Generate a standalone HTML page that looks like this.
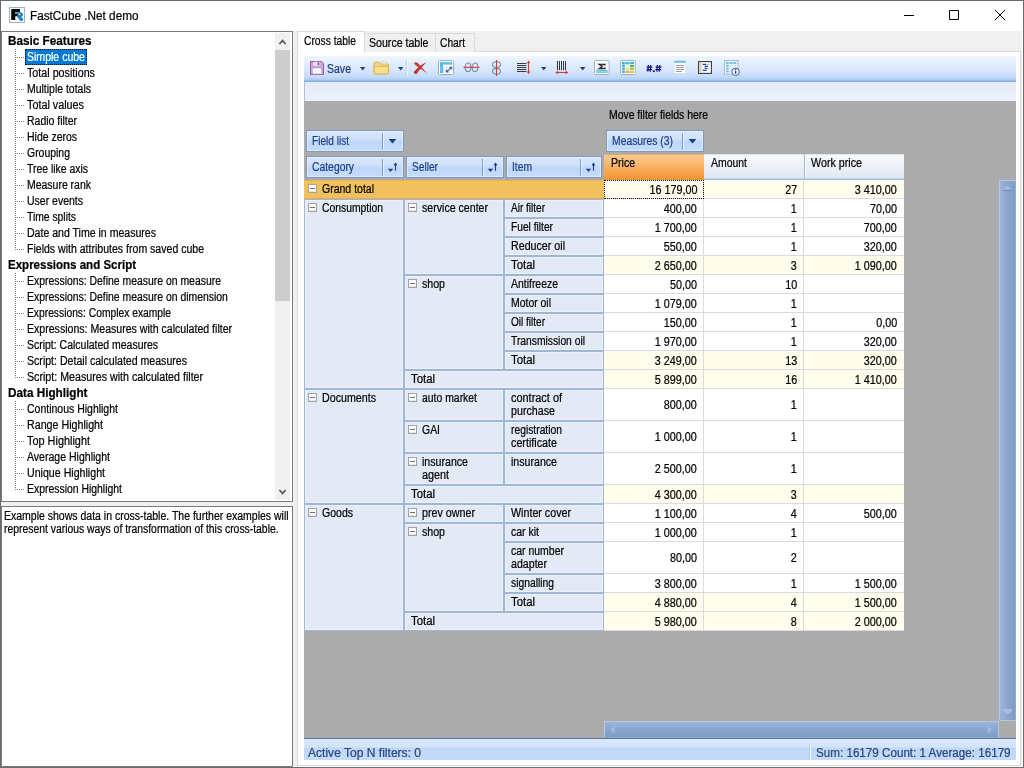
<!DOCTYPE html>
<html><head><meta charset="utf-8"><title>FastCube .Net demo</title>
<style>
html,body{margin:0;padding:0;}
body{width:1024px;height:768px;overflow:hidden;background:#fff;position:relative;font-family:"Liberation Sans",sans-serif;font-size:12px;color:#000;}
div,span,svg{position:absolute;box-sizing:border-box;}
span{white-space:pre;line-height:16px;transform-origin:0 0;-webkit-text-stroke:0.22px;}
#r{left:0;top:0;width:1024px;height:768px;will-change:transform;}
</style></head><body><div id="r">

<div style="left:0px;top:0px;width:1024px;height:768px;border:1px solid #6c6c6c;"></div>
<div style="left:1px;top:31px;width:1021px;height:735px;background:#f0f0f0;"></div>
<svg style="left:9px;top:7px" width="16" height="16" viewBox="0 0 16 16"><rect x="0.5" y="0.5" width="15" height="15" fill="#fff" stroke="#9db3c6"/><path d="M2.2 12.9V3.3c0-.8.5-1.3 1.3-1.3h7.4v3.2H6.3v1.5h3V9.3h-3v3.6z" fill="#0a0a0a"/><path d="M7.2 5.2h3.9c1.8 0 2.9 1 2.9 2.4 0 1.1-.6 1.9-1.7 2.2l2.2 2.9-1.6 1.4H11.6L8.2 9.9V7.9h2.5c.5 0 .8-.2.8-.6s-.3-.6-.8-.6H7.2z" fill="#1583c4"/></svg>
<span style="left:30px;top:8px;transform:scaleX(0.980);">FastCube .Net demo</span>
<svg style="left:896px;top:1px" width="127" height="29" viewBox="0 0 127 29"><path d="M8 14.5h10M53.5 9.5h9v9h-9zM99 9l10 10M109 9l-10 10" stroke="#000" stroke-width="1" fill="none"/></svg>
<div style="left:1px;top:31px;width:292px;height:471px;background:#fff;border:1px solid #7a7a7a;"></div>
<div style="left:275px;top:33px;width:15px;height:467px;background:#f0f0f0;"></div>
<div style="left:275px;top:50px;width:15px;height:251px;background:#cdcdcd;"></div>
<svg style="left:274px;top:33px" width="17" height="467" viewBox="0 0 17 467"><path d="M5.400 11l3.100-3.400 3.100 3.400M5.400 457l3.100 3.400 3.100-3.400" stroke="#5a5a5a" stroke-width="1.800" fill="none"/></svg>
<div style="left:15px;top:49px;width:1px;height:201px;background:repeating-linear-gradient(#808080 0 1px,transparent 1px 2px);"></div>
<div style="left:16px;top:57px;width:9px;height:1px;background:repeating-linear-gradient(90deg,transparent 0 1px,#808080 1px 2px);"></div>
<div style="left:16px;top:73px;width:9px;height:1px;background:repeating-linear-gradient(90deg,transparent 0 1px,#808080 1px 2px);"></div>
<div style="left:16px;top:89px;width:9px;height:1px;background:repeating-linear-gradient(90deg,transparent 0 1px,#808080 1px 2px);"></div>
<div style="left:16px;top:105px;width:9px;height:1px;background:repeating-linear-gradient(90deg,transparent 0 1px,#808080 1px 2px);"></div>
<div style="left:16px;top:121px;width:9px;height:1px;background:repeating-linear-gradient(90deg,transparent 0 1px,#808080 1px 2px);"></div>
<div style="left:16px;top:137px;width:9px;height:1px;background:repeating-linear-gradient(90deg,transparent 0 1px,#808080 1px 2px);"></div>
<div style="left:16px;top:153px;width:9px;height:1px;background:repeating-linear-gradient(90deg,transparent 0 1px,#808080 1px 2px);"></div>
<div style="left:16px;top:169px;width:9px;height:1px;background:repeating-linear-gradient(90deg,transparent 0 1px,#808080 1px 2px);"></div>
<div style="left:16px;top:185px;width:9px;height:1px;background:repeating-linear-gradient(90deg,transparent 0 1px,#808080 1px 2px);"></div>
<div style="left:16px;top:201px;width:9px;height:1px;background:repeating-linear-gradient(90deg,transparent 0 1px,#808080 1px 2px);"></div>
<div style="left:16px;top:217px;width:9px;height:1px;background:repeating-linear-gradient(90deg,transparent 0 1px,#808080 1px 2px);"></div>
<div style="left:16px;top:233px;width:9px;height:1px;background:repeating-linear-gradient(90deg,transparent 0 1px,#808080 1px 2px);"></div>
<div style="left:16px;top:249px;width:9px;height:1px;background:repeating-linear-gradient(90deg,transparent 0 1px,#808080 1px 2px);"></div>
<div style="left:15px;top:273px;width:1px;height:105px;background:repeating-linear-gradient(#808080 0 1px,transparent 1px 2px);"></div>
<div style="left:16px;top:281px;width:9px;height:1px;background:repeating-linear-gradient(90deg,transparent 0 1px,#808080 1px 2px);"></div>
<div style="left:16px;top:297px;width:9px;height:1px;background:repeating-linear-gradient(90deg,transparent 0 1px,#808080 1px 2px);"></div>
<div style="left:16px;top:313px;width:9px;height:1px;background:repeating-linear-gradient(90deg,transparent 0 1px,#808080 1px 2px);"></div>
<div style="left:16px;top:329px;width:9px;height:1px;background:repeating-linear-gradient(90deg,transparent 0 1px,#808080 1px 2px);"></div>
<div style="left:16px;top:345px;width:9px;height:1px;background:repeating-linear-gradient(90deg,transparent 0 1px,#808080 1px 2px);"></div>
<div style="left:16px;top:361px;width:9px;height:1px;background:repeating-linear-gradient(90deg,transparent 0 1px,#808080 1px 2px);"></div>
<div style="left:16px;top:377px;width:9px;height:1px;background:repeating-linear-gradient(90deg,transparent 0 1px,#808080 1px 2px);"></div>
<div style="left:15px;top:401px;width:1px;height:89px;background:repeating-linear-gradient(#808080 0 1px,transparent 1px 2px);"></div>
<div style="left:16px;top:409px;width:9px;height:1px;background:repeating-linear-gradient(90deg,transparent 0 1px,#808080 1px 2px);"></div>
<div style="left:16px;top:425px;width:9px;height:1px;background:repeating-linear-gradient(90deg,transparent 0 1px,#808080 1px 2px);"></div>
<div style="left:16px;top:441px;width:9px;height:1px;background:repeating-linear-gradient(90deg,transparent 0 1px,#808080 1px 2px);"></div>
<div style="left:16px;top:457px;width:9px;height:1px;background:repeating-linear-gradient(90deg,transparent 0 1px,#808080 1px 2px);"></div>
<div style="left:16px;top:473px;width:9px;height:1px;background:repeating-linear-gradient(90deg,transparent 0 1px,#808080 1px 2px);"></div>
<div style="left:16px;top:489px;width:9px;height:1px;background:repeating-linear-gradient(90deg,transparent 0 1px,#808080 1px 2px);"></div>
<span style="left:8.4px;top:33px;font-weight:bold;transform:scaleX(0.978);">Basic Features</span>
<div style="left:25px;top:49px;width:62px;height:16px;background:#0078d7;border:1px dotted #111;"></div>
<span style="left:27px;top:49px;color:#fff;transform:scaleX(0.878);">Simple cube</span>
<span style="left:27px;top:65px;transform:scaleX(0.894);">Total positions</span>
<span style="left:27px;top:81px;transform:scaleX(0.872);">Multiple totals</span>
<span style="left:27px;top:97px;transform:scaleX(0.899);">Total values</span>
<span style="left:27px;top:113px;transform:scaleX(0.872);">Radio filter</span>
<span style="left:27px;top:129px;transform:scaleX(0.872);">Hide zeros</span>
<span style="left:27px;top:145px;transform:scaleX(0.871);">Grouping</span>
<span style="left:27px;top:161px;transform:scaleX(0.868);">Tree like axis</span>
<span style="left:27px;top:177px;transform:scaleX(0.872);">Measure rank</span>
<span style="left:27px;top:193px;transform:scaleX(0.875);">User events</span>
<span style="left:27px;top:209px;transform:scaleX(0.861);">Time splits</span>
<span style="left:27px;top:225px;transform:scaleX(0.879);">Date and Time in measures</span>
<span style="left:27px;top:241px;transform:scaleX(0.879);">Fields with attributes from saved cube</span>
<span style="left:8.4px;top:257px;font-weight:bold;transform:scaleX(0.960);">Expressions and Script</span>
<span style="left:27px;top:273px;transform:scaleX(0.868);">Expressions: Define measure on measure</span>
<span style="left:27px;top:289px;transform:scaleX(0.868);">Expressions: Define measure on dimension</span>
<span style="left:27px;top:305px;transform:scaleX(0.857);">Expressions: Complex example</span>
<span style="left:27px;top:321px;transform:scaleX(0.881);">Expressions: Measures with calculated filter</span>
<span style="left:27px;top:337px;transform:scaleX(0.873);">Script: Calculated measures</span>
<span style="left:27px;top:353px;transform:scaleX(0.882);">Script: Detail calculated measures</span>
<span style="left:27px;top:369px;transform:scaleX(0.889);">Script: Measures with calculated filter</span>
<span style="left:8.4px;top:385px;font-weight:bold;transform:scaleX(0.977);">Data Highlight</span>
<span style="left:27px;top:401px;transform:scaleX(0.874);">Continous Highlight</span>
<span style="left:27px;top:417px;transform:scaleX(0.890);">Range Highlight</span>
<span style="left:27px;top:433px;transform:scaleX(0.908);">Top Highlight</span>
<span style="left:27px;top:449px;transform:scaleX(0.878);">Average Highlight</span>
<span style="left:27px;top:465px;transform:scaleX(0.886);">Unique Highlight</span>
<span style="left:27px;top:481px;transform:scaleX(0.868);">Expression Highlight</span>
<div style="left:1px;top:506px;width:292px;height:261px;background:#fff;border:1px solid #7a7a7a;"></div>
<span style="left:4px;top:508px;transform:scaleX(0.875);">Example shows data in cross-table. The further examples will</span>
<span style="left:3.5px;top:521px;transform:scaleX(0.865);">represent various ways of transformation of this cross-table.</span>
<div style="left:297px;top:51px;width:724px;height:715px;background:#fff;border:1px solid #dadada;"></div>
<div style="left:364px;top:33px;width:72px;height:19px;background:#f0f0f0;border:1px solid #d9d9d9;border-bottom:none;"></div>
<div style="left:435px;top:33px;width:40px;height:19px;background:#f0f0f0;border:1px solid #d9d9d9;border-bottom:none;"></div>
<div style="left:297px;top:31px;width:68px;height:21px;background:#fff;border:1px solid #d9d9d9;border-bottom:none;"></div>
<span style="left:304.3px;top:33px;transform:scaleX(0.857);">Cross table</span>
<span style="left:369px;top:35px;transform:scaleX(0.883);">Source table</span>
<span style="left:440.2px;top:35px;transform:scaleX(0.852);">Chart</span>
<div style="left:304px;top:56px;width:712px;height:26px;background:linear-gradient(#f0f6fe 0,#e3eefd 25%,#d4e5fc 60%,#c1d9f9 82%,#adcbf4 92%,#88acdf 96.500%,#86aade 100%);border-radius:2px 2px 0 0;"></div>
<div style="left:304px;top:82px;width:712px;height:19.5px;background:linear-gradient(#e3ebf8,#edf2fb);border-left:1px solid #b4c2d8;"></div>
<span style="left:327.3px;top:61px;color:#1f3b7d;transform:scaleX(0.877);">Save</span>
<div style="left:304px;top:101px;width:712px;height:638px;background:#ababab;"></div>
<span style="left:609px;top:107px;transform:scaleX(0.868);">Move filter fields here</span>
<div style="left:306px;top:130px;width:98px;height:22px;background:linear-gradient(#d9e8fd 0,#cfe1fb 40%,#bfd7f8 55%,#c6dcfa 100%);border:1px solid #7f99c2;box-shadow:inset 0 0 0 1px rgba(235,244,255,.6);"></div>
<span style="left:312px;top:133px;color:#1c3f8a;transform:scaleX(0.841);">Field list</span>
<div style="left:382px;top:133px;width:1px;height:17px;background:#7d9dce;"></div>
<div style="left:383px;top:133px;width:1px;height:17px;background:rgba(255,255,255,.55);"></div>
<svg style="left:388px;top:139px" width="9" height="5" viewBox="0 0 9 5"><path d="M0.6 0h7.8L4.5 4.6z" fill="#1c3f8c"/></svg>
<div style="left:606px;top:130px;width:98px;height:22px;background:linear-gradient(#d9e8fd 0,#cfe1fb 40%,#bfd7f8 55%,#c6dcfa 100%);border:1px solid #7f99c2;box-shadow:inset 0 0 0 1px rgba(235,244,255,.6);"></div>
<span style="left:612px;top:133px;color:#1c3f8a;transform:scaleX(0.863);">Measures (3)</span>
<div style="left:682px;top:133px;width:1px;height:17px;background:#7d9dce;"></div>
<div style="left:683px;top:133px;width:1px;height:17px;background:rgba(255,255,255,.55);"></div>
<svg style="left:688px;top:139px" width="9" height="5" viewBox="0 0 9 5"><path d="M0.6 0h7.8L4.5 4.6z" fill="#1c3f8c"/></svg>
<div style="left:306px;top:156px;width:98px;height:22px;background:linear-gradient(#d9e8fd 0,#cfe1fb 40%,#bfd7f8 55%,#c6dcfa 100%);border:1px solid #7f99c2;box-shadow:inset 0 0 0 1px rgba(235,244,255,.6);"></div>
<span style="left:312px;top:159px;color:#1c3f8a;transform:scaleX(0.863);">Category</span>
<div style="left:382px;top:159px;width:1px;height:17px;background:#7d9dce;"></div>
<div style="left:383px;top:159px;width:1px;height:17px;background:rgba(255,255,255,.55);"></div>
<svg style="left:387px;top:162px" width="12" height="12" viewBox="0 0 12 12"><path d="M0.8 6.8h5.4L3.5 10z" fill="#1c3f8c"/><path d="M8.5 8.8V1.6M7.1 3.3l1.4-1.8 1.4 1.8" stroke="#1c3f8c" stroke-width="1.1" fill="none"/></svg>
<div style="left:406px;top:156px;width:98px;height:22px;background:linear-gradient(#d9e8fd 0,#cfe1fb 40%,#bfd7f8 55%,#c6dcfa 100%);border:1px solid #7f99c2;box-shadow:inset 0 0 0 1px rgba(235,244,255,.6);"></div>
<span style="left:412px;top:159px;color:#1c3f8a;transform:scaleX(0.847);">Seller</span>
<div style="left:482px;top:159px;width:1px;height:17px;background:#7d9dce;"></div>
<div style="left:483px;top:159px;width:1px;height:17px;background:rgba(255,255,255,.55);"></div>
<svg style="left:487px;top:162px" width="12" height="12" viewBox="0 0 12 12"><path d="M0.8 6.8h5.4L3.5 10z" fill="#1c3f8c"/><path d="M8.5 8.8V1.6M7.1 3.3l1.4-1.8 1.4 1.8" stroke="#1c3f8c" stroke-width="1.1" fill="none"/></svg>
<div style="left:506px;top:156px;width:96px;height:22px;background:linear-gradient(#d9e8fd 0,#cfe1fb 40%,#bfd7f8 55%,#c6dcfa 100%);border:1px solid #7f99c2;box-shadow:inset 0 0 0 1px rgba(235,244,255,.6);"></div>
<span style="left:512px;top:159px;color:#1c3f8a;transform:scaleX(0.857);">Item</span>
<div style="left:580px;top:159px;width:1px;height:17px;background:#7d9dce;"></div>
<div style="left:581px;top:159px;width:1px;height:17px;background:rgba(255,255,255,.55);"></div>
<svg style="left:585px;top:162px" width="12" height="12" viewBox="0 0 12 12"><path d="M0.8 6.8h5.4L3.5 10z" fill="#1c3f8c"/><path d="M8.5 8.8V1.6M7.1 3.3l1.4-1.8 1.4 1.8" stroke="#1c3f8c" stroke-width="1.1" fill="none"/></svg>
<div style="left:604px;top:154px;width:100px;height:26px;background:linear-gradient(#d9a766 0,#e4b071 1px,#fbc88f 1.5px,#f9ba74 35%,#f6a650 65%,#f4983a 92%,#e58f3a 100%);"></div>
<div style="left:704px;top:154px;width:100px;height:26px;background:linear-gradient(#d3d7de 0,#f3f6fb 1px,#f7f9fd 2px,#eef2f9 40%,#dfe7f3 92%,#a3bbda 97%);"></div>
<div style="left:804px;top:154px;width:99.5px;height:26px;background:linear-gradient(#d3d7de 0,#f3f6fb 1px,#f7f9fd 2px,#eef2f9 40%,#dfe7f3 92%,#a3bbda 97%);border-left:1px solid #a3bbda;"></div>
<div style="left:805px;top:155px;width:1px;height:23px;background:rgba(255,255,255,.7);"></div>
<span style="left:611px;top:155px;transform:scaleX(0.878);">Price</span>
<span style="left:711px;top:155px;transform:scaleX(0.870);">Amount</span>
<span style="left:811px;top:155px;transform:scaleX(0.893);">Work price</span>
<div style="left:604px;top:180px;width:299.5px;height:451px;background:#fff;"></div>
<div style="left:604px;top:180px;width:299.5px;height:19px;background:#fffdec;"></div>
<div style="left:604px;top:198px;width:299.5px;height:1px;background:#d9dbe0;"></div>
<div style="left:604px;top:217px;width:299.5px;height:1px;background:#d9dbe0;"></div>
<div style="left:604px;top:236px;width:299.5px;height:1px;background:#d9dbe0;"></div>
<div style="left:604px;top:255px;width:299.5px;height:1px;background:#d9dbe0;"></div>
<div style="left:604px;top:256px;width:299.5px;height:19px;background:#fffdec;"></div>
<div style="left:604px;top:274px;width:299.5px;height:1px;background:#d9dbe0;"></div>
<div style="left:604px;top:293px;width:299.5px;height:1px;background:#d9dbe0;"></div>
<div style="left:604px;top:312px;width:299.5px;height:1px;background:#d9dbe0;"></div>
<div style="left:604px;top:331px;width:299.5px;height:1px;background:#d9dbe0;"></div>
<div style="left:604px;top:350px;width:299.5px;height:1px;background:#d9dbe0;"></div>
<div style="left:604px;top:351px;width:299.5px;height:19px;background:#fffdec;"></div>
<div style="left:604px;top:369px;width:299.5px;height:1px;background:#d9dbe0;"></div>
<div style="left:604px;top:370px;width:299.5px;height:19px;background:#fffdec;"></div>
<div style="left:604px;top:388px;width:299.5px;height:1px;background:#d9dbe0;"></div>
<div style="left:604px;top:420px;width:299.5px;height:1px;background:#d9dbe0;"></div>
<div style="left:604px;top:452px;width:299.5px;height:1px;background:#d9dbe0;"></div>
<div style="left:604px;top:484px;width:299.5px;height:1px;background:#d9dbe0;"></div>
<div style="left:604px;top:485px;width:299.5px;height:19px;background:#fffdec;"></div>
<div style="left:604px;top:503px;width:299.5px;height:1px;background:#d9dbe0;"></div>
<div style="left:604px;top:522px;width:299.5px;height:1px;background:#d9dbe0;"></div>
<div style="left:604px;top:541px;width:299.5px;height:1px;background:#d9dbe0;"></div>
<div style="left:604px;top:573px;width:299.5px;height:1px;background:#d9dbe0;"></div>
<div style="left:604px;top:592px;width:299.5px;height:1px;background:#d9dbe0;"></div>
<div style="left:604px;top:593px;width:299.5px;height:19px;background:#fffdec;"></div>
<div style="left:604px;top:611px;width:299.5px;height:1px;background:#d9dbe0;"></div>
<div style="left:604px;top:612px;width:299.5px;height:19px;background:#fffdec;"></div>
<div style="left:604px;top:630px;width:299.5px;height:1px;background:#d9dbe0;"></div>
<div style="left:703px;top:180px;width:1px;height:451px;background:#d9dbe0;"></div>
<div style="left:803px;top:180px;width:1px;height:451px;background:#d9dbe0;"></div>
<span style="right:327px;top:182px;transform:scaleX(0.899);transform-origin:100% 0;">16 179,00</span>
<span style="right:227px;top:182px;transform:scaleX(0.899);transform-origin:100% 0;">27</span>
<span style="right:127px;top:182px;transform:scaleX(0.899);transform-origin:100% 0;">3 410,00</span>
<span style="right:327px;top:201px;transform:scaleX(0.899);transform-origin:100% 0;">400,00</span>
<span style="right:227px;top:201px;transform:scaleX(0.899);transform-origin:100% 0;">1</span>
<span style="right:127px;top:201px;transform:scaleX(0.899);transform-origin:100% 0;">70,00</span>
<span style="right:327px;top:220px;transform:scaleX(0.899);transform-origin:100% 0;">1 700,00</span>
<span style="right:227px;top:220px;transform:scaleX(0.899);transform-origin:100% 0;">1</span>
<span style="right:127px;top:220px;transform:scaleX(0.899);transform-origin:100% 0;">700,00</span>
<span style="right:327px;top:239px;transform:scaleX(0.899);transform-origin:100% 0;">550,00</span>
<span style="right:227px;top:239px;transform:scaleX(0.899);transform-origin:100% 0;">1</span>
<span style="right:127px;top:239px;transform:scaleX(0.899);transform-origin:100% 0;">320,00</span>
<span style="right:327px;top:258px;transform:scaleX(0.899);transform-origin:100% 0;">2 650,00</span>
<span style="right:227px;top:258px;transform:scaleX(0.899);transform-origin:100% 0;">3</span>
<span style="right:127px;top:258px;transform:scaleX(0.899);transform-origin:100% 0;">1 090,00</span>
<span style="right:327px;top:277px;transform:scaleX(0.899);transform-origin:100% 0;">50,00</span>
<span style="right:227px;top:277px;transform:scaleX(0.899);transform-origin:100% 0;">10</span>
<span style="right:327px;top:296px;transform:scaleX(0.899);transform-origin:100% 0;">1 079,00</span>
<span style="right:227px;top:296px;transform:scaleX(0.899);transform-origin:100% 0;">1</span>
<span style="right:327px;top:315px;transform:scaleX(0.899);transform-origin:100% 0;">150,00</span>
<span style="right:227px;top:315px;transform:scaleX(0.899);transform-origin:100% 0;">1</span>
<span style="right:127px;top:315px;transform:scaleX(0.899);transform-origin:100% 0;">0,00</span>
<span style="right:327px;top:334px;transform:scaleX(0.899);transform-origin:100% 0;">1 970,00</span>
<span style="right:227px;top:334px;transform:scaleX(0.899);transform-origin:100% 0;">1</span>
<span style="right:127px;top:334px;transform:scaleX(0.899);transform-origin:100% 0;">320,00</span>
<span style="right:327px;top:353px;transform:scaleX(0.899);transform-origin:100% 0;">3 249,00</span>
<span style="right:227px;top:353px;transform:scaleX(0.899);transform-origin:100% 0;">13</span>
<span style="right:127px;top:353px;transform:scaleX(0.899);transform-origin:100% 0;">320,00</span>
<span style="right:327px;top:372px;transform:scaleX(0.899);transform-origin:100% 0;">5 899,00</span>
<span style="right:227px;top:372px;transform:scaleX(0.899);transform-origin:100% 0;">16</span>
<span style="right:127px;top:372px;transform:scaleX(0.899);transform-origin:100% 0;">1 410,00</span>
<span style="right:327px;top:397px;transform:scaleX(0.899);transform-origin:100% 0;">800,00</span>
<span style="right:227px;top:397px;transform:scaleX(0.899);transform-origin:100% 0;">1</span>
<span style="right:327px;top:429px;transform:scaleX(0.899);transform-origin:100% 0;">1 000,00</span>
<span style="right:227px;top:429px;transform:scaleX(0.899);transform-origin:100% 0;">1</span>
<span style="right:327px;top:461px;transform:scaleX(0.899);transform-origin:100% 0;">2 500,00</span>
<span style="right:227px;top:461px;transform:scaleX(0.899);transform-origin:100% 0;">1</span>
<span style="right:327px;top:487px;transform:scaleX(0.899);transform-origin:100% 0;">4 300,00</span>
<span style="right:227px;top:487px;transform:scaleX(0.899);transform-origin:100% 0;">3</span>
<span style="right:327px;top:506px;transform:scaleX(0.899);transform-origin:100% 0;">1 100,00</span>
<span style="right:227px;top:506px;transform:scaleX(0.899);transform-origin:100% 0;">4</span>
<span style="right:127px;top:506px;transform:scaleX(0.899);transform-origin:100% 0;">500,00</span>
<span style="right:327px;top:525px;transform:scaleX(0.899);transform-origin:100% 0;">1 000,00</span>
<span style="right:227px;top:525px;transform:scaleX(0.899);transform-origin:100% 0;">1</span>
<span style="right:327px;top:550px;transform:scaleX(0.899);transform-origin:100% 0;">80,00</span>
<span style="right:227px;top:550px;transform:scaleX(0.899);transform-origin:100% 0;">2</span>
<span style="right:327px;top:576px;transform:scaleX(0.899);transform-origin:100% 0;">3 800,00</span>
<span style="right:227px;top:576px;transform:scaleX(0.899);transform-origin:100% 0;">1</span>
<span style="right:127px;top:576px;transform:scaleX(0.899);transform-origin:100% 0;">1 500,00</span>
<span style="right:327px;top:595px;transform:scaleX(0.899);transform-origin:100% 0;">4 880,00</span>
<span style="right:227px;top:595px;transform:scaleX(0.899);transform-origin:100% 0;">4</span>
<span style="right:127px;top:595px;transform:scaleX(0.899);transform-origin:100% 0;">1 500,00</span>
<span style="right:327px;top:614px;transform:scaleX(0.899);transform-origin:100% 0;">5 980,00</span>
<span style="right:227px;top:614px;transform:scaleX(0.899);transform-origin:100% 0;">8</span>
<span style="right:127px;top:614px;transform:scaleX(0.899);transform-origin:100% 0;">2 000,00</span>
<div style="left:604px;top:180px;width:100px;height:19px;border:1px dotted #111;"></div>
<div style="left:304px;top:180px;width:300px;height:19px;background:#f3c05e;border-top:1px solid #efb24e;border-bottom:1px solid #e7a84a;"></div>
<svg style="left:308px;top:184px" width="9" height="9" viewBox="0 0 9 9"><rect x="0.5" y="0.5" width="8" height="8" fill="#fcfcfc" stroke="#a2a2a2"/><path d="M1 7.500h7" stroke="#e6e6e6"/><path d="M2 4.500h5" stroke="#707070"/></svg>
<span style="left:321.5px;top:181px;transform:scaleX(0.876);">Grand total</span>
<div style="left:304px;top:199px;width:100px;height:190px;background:#e3eaf6;border:1px solid #a1b6d3;box-shadow:inset 0 0 0 1px #e8f1fd;"></div>
<svg style="left:308px;top:203px" width="9" height="9" viewBox="0 0 9 9"><rect x="0.5" y="0.5" width="8" height="8" fill="#fcfcfc" stroke="#a2a2a2"/><path d="M1 7.500h7" stroke="#e6e6e6"/><path d="M2 4.500h5" stroke="#707070"/></svg>
<span style="left:321.5px;top:200px;transform:scaleX(0.863);">Consumption</span>
<div style="left:304px;top:389px;width:100px;height:115px;background:#e3eaf6;border:1px solid #a1b6d3;box-shadow:inset 0 0 0 1px #e8f1fd;"></div>
<svg style="left:308px;top:393px" width="9" height="9" viewBox="0 0 9 9"><rect x="0.5" y="0.5" width="8" height="8" fill="#fcfcfc" stroke="#a2a2a2"/><path d="M1 7.500h7" stroke="#e6e6e6"/><path d="M2 4.500h5" stroke="#707070"/></svg>
<span style="left:321.5px;top:390px;transform:scaleX(0.890);">Documents</span>
<div style="left:304px;top:504px;width:100px;height:127px;background:#e3eaf6;border:1px solid #a1b6d3;box-shadow:inset 0 0 0 1px #e8f1fd;"></div>
<svg style="left:308px;top:508px" width="9" height="9" viewBox="0 0 9 9"><rect x="0.5" y="0.5" width="8" height="8" fill="#fcfcfc" stroke="#a2a2a2"/><path d="M1 7.500h7" stroke="#e6e6e6"/><path d="M2 4.500h5" stroke="#707070"/></svg>
<span style="left:321.5px;top:505px;transform:scaleX(0.877);">Goods</span>
<div style="left:404px;top:199px;width:100px;height:76px;background:#e3eaf6;border:1px solid #a1b6d3;box-shadow:inset 0 0 0 1px #e8f1fd;"></div>
<svg style="left:408px;top:203px" width="9" height="9" viewBox="0 0 9 9"><rect x="0.5" y="0.5" width="8" height="8" fill="#fcfcfc" stroke="#a2a2a2"/><path d="M1 7.500h7" stroke="#e6e6e6"/><path d="M2 4.500h5" stroke="#707070"/></svg>
<span style="left:421.5px;top:200px;transform:scaleX(0.884);">service center</span>
<div style="left:404px;top:275px;width:100px;height:95px;background:#e3eaf6;border:1px solid #a1b6d3;box-shadow:inset 0 0 0 1px #e8f1fd;"></div>
<svg style="left:408px;top:279px" width="9" height="9" viewBox="0 0 9 9"><rect x="0.5" y="0.5" width="8" height="8" fill="#fcfcfc" stroke="#a2a2a2"/><path d="M1 7.500h7" stroke="#e6e6e6"/><path d="M2 4.500h5" stroke="#707070"/></svg>
<span style="left:421.5px;top:276px;transform:scaleX(0.884);">shop</span>
<div style="left:404px;top:370px;width:200px;height:19px;background:#e3eaf6;border:1px solid #a1b6d3;box-shadow:inset 0 0 0 1px #e8f1fd;"></div>
<span style="left:411px;top:371px;transform:scaleX(0.947);">Total</span>
<div style="left:404px;top:389px;width:100px;height:32px;background:#e3eaf6;border:1px solid #a1b6d3;box-shadow:inset 0 0 0 1px #e8f1fd;"></div>
<svg style="left:408px;top:393px" width="9" height="9" viewBox="0 0 9 9"><rect x="0.5" y="0.5" width="8" height="8" fill="#fcfcfc" stroke="#a2a2a2"/><path d="M1 7.500h7" stroke="#e6e6e6"/><path d="M2 4.500h5" stroke="#707070"/></svg>
<span style="left:421.5px;top:390px;transform:scaleX(0.868);">auto market</span>
<div style="left:404px;top:421px;width:100px;height:32px;background:#e3eaf6;border:1px solid #a1b6d3;box-shadow:inset 0 0 0 1px #e8f1fd;"></div>
<svg style="left:408px;top:425px" width="9" height="9" viewBox="0 0 9 9"><rect x="0.5" y="0.5" width="8" height="8" fill="#fcfcfc" stroke="#a2a2a2"/><path d="M1 7.500h7" stroke="#e6e6e6"/><path d="M2 4.500h5" stroke="#707070"/></svg>
<span style="left:421.5px;top:422px;transform:scaleX(0.871);">GAI</span>
<div style="left:404px;top:453px;width:100px;height:32px;background:#e3eaf6;border:1px solid #a1b6d3;box-shadow:inset 0 0 0 1px #e8f1fd;"></div>
<svg style="left:408px;top:457px" width="9" height="9" viewBox="0 0 9 9"><rect x="0.5" y="0.5" width="8" height="8" fill="#fcfcfc" stroke="#a2a2a2"/><path d="M1 7.500h7" stroke="#e6e6e6"/><path d="M2 4.500h5" stroke="#707070"/></svg>
<span style="left:421.5px;top:454px;transform:scaleX(0.884);">insurance</span>
<span style="left:421.5px;top:467px;transform:scaleX(0.899);">agent</span>
<div style="left:404px;top:485px;width:200px;height:19px;background:#e3eaf6;border:1px solid #a1b6d3;box-shadow:inset 0 0 0 1px #e8f1fd;"></div>
<span style="left:411px;top:486px;transform:scaleX(0.947);">Total</span>
<div style="left:404px;top:504px;width:100px;height:19px;background:#e3eaf6;border:1px solid #a1b6d3;box-shadow:inset 0 0 0 1px #e8f1fd;"></div>
<svg style="left:408px;top:508px" width="9" height="9" viewBox="0 0 9 9"><rect x="0.5" y="0.5" width="8" height="8" fill="#fcfcfc" stroke="#a2a2a2"/><path d="M1 7.500h7" stroke="#e6e6e6"/><path d="M2 4.500h5" stroke="#707070"/></svg>
<span style="left:421.5px;top:505px;transform:scaleX(0.893);">prev owner</span>
<div style="left:404px;top:523px;width:100px;height:89px;background:#e3eaf6;border:1px solid #a1b6d3;box-shadow:inset 0 0 0 1px #e8f1fd;"></div>
<svg style="left:408px;top:527px" width="9" height="9" viewBox="0 0 9 9"><rect x="0.5" y="0.5" width="8" height="8" fill="#fcfcfc" stroke="#a2a2a2"/><path d="M1 7.500h7" stroke="#e6e6e6"/><path d="M2 4.500h5" stroke="#707070"/></svg>
<span style="left:421.5px;top:524px;transform:scaleX(0.884);">shop</span>
<div style="left:404px;top:612px;width:200px;height:19px;background:#e3eaf6;border:1px solid #a1b6d3;box-shadow:inset 0 0 0 1px #e8f1fd;"></div>
<span style="left:411px;top:613px;transform:scaleX(0.947);">Total</span>
<div style="left:504px;top:199px;width:100px;height:19px;background:#e3eaf6;border:1px solid #a1b6d3;box-shadow:inset 0 0 0 1px #e8f1fd;"></div>
<span style="left:510.5px;top:200px;transform:scaleX(0.836);">Air filter</span>
<div style="left:504px;top:218px;width:100px;height:19px;background:#e3eaf6;border:1px solid #a1b6d3;box-shadow:inset 0 0 0 1px #e8f1fd;"></div>
<span style="left:510.5px;top:219px;transform:scaleX(0.851);">Fuel filter</span>
<div style="left:504px;top:237px;width:100px;height:19px;background:#e3eaf6;border:1px solid #a1b6d3;box-shadow:inset 0 0 0 1px #e8f1fd;"></div>
<span style="left:510.5px;top:238px;transform:scaleX(0.890);">Reducer oil</span>
<div style="left:504px;top:256px;width:100px;height:19px;background:#e3eaf6;border:1px solid #a1b6d3;box-shadow:inset 0 0 0 1px #e8f1fd;"></div>
<span style="left:510.5px;top:257px;transform:scaleX(0.947);">Total</span>
<div style="left:504px;top:275px;width:100px;height:19px;background:#e3eaf6;border:1px solid #a1b6d3;box-shadow:inset 0 0 0 1px #e8f1fd;"></div>
<span style="left:510.5px;top:276px;transform:scaleX(0.870);">Antifreeze</span>
<div style="left:504px;top:294px;width:100px;height:19px;background:#e3eaf6;border:1px solid #a1b6d3;box-shadow:inset 0 0 0 1px #e8f1fd;"></div>
<span style="left:510.5px;top:295px;transform:scaleX(0.869);">Motor oil</span>
<div style="left:504px;top:313px;width:100px;height:19px;background:#e3eaf6;border:1px solid #a1b6d3;box-shadow:inset 0 0 0 1px #e8f1fd;"></div>
<span style="left:510.5px;top:314px;transform:scaleX(0.836);">Oil filter</span>
<div style="left:504px;top:332px;width:100px;height:19px;background:#e3eaf6;border:1px solid #a1b6d3;box-shadow:inset 0 0 0 1px #e8f1fd;"></div>
<span style="left:510.5px;top:333px;transform:scaleX(0.858);">Transmission oil</span>
<div style="left:504px;top:351px;width:100px;height:19px;background:#e3eaf6;border:1px solid #a1b6d3;box-shadow:inset 0 0 0 1px #e8f1fd;"></div>
<span style="left:510.5px;top:352px;transform:scaleX(0.947);">Total</span>
<div style="left:504px;top:389px;width:100px;height:32px;background:#e3eaf6;border:1px solid #a1b6d3;box-shadow:inset 0 0 0 1px #e8f1fd;"></div>
<span style="left:510.5px;top:390px;transform:scaleX(0.910);">contract of</span>
<span style="left:510.5px;top:403px;transform:scaleX(0.891);">purchase</span>
<div style="left:504px;top:421px;width:100px;height:32px;background:#e3eaf6;border:1px solid #a1b6d3;box-shadow:inset 0 0 0 1px #e8f1fd;"></div>
<span style="left:510.5px;top:422px;transform:scaleX(0.859);">registration</span>
<span style="left:510.5px;top:435px;transform:scaleX(0.896);">certificate</span>
<div style="left:504px;top:453px;width:100px;height:32px;background:#e3eaf6;border:1px solid #a1b6d3;box-shadow:inset 0 0 0 1px #e8f1fd;"></div>
<span style="left:510.5px;top:454px;transform:scaleX(0.884);">insurance</span>
<div style="left:504px;top:504px;width:100px;height:19px;background:#e3eaf6;border:1px solid #a1b6d3;box-shadow:inset 0 0 0 1px #e8f1fd;"></div>
<span style="left:510.5px;top:505px;transform:scaleX(0.891);">Winter cover</span>
<div style="left:504px;top:523px;width:100px;height:19px;background:#e3eaf6;border:1px solid #a1b6d3;box-shadow:inset 0 0 0 1px #e8f1fd;"></div>
<span style="left:510.5px;top:524px;transform:scaleX(0.875);">car kit</span>
<div style="left:504px;top:542px;width:100px;height:32px;background:#e3eaf6;border:1px solid #a1b6d3;box-shadow:inset 0 0 0 1px #e8f1fd;"></div>
<span style="left:510.5px;top:543px;transform:scaleX(0.873);">car number</span>
<span style="left:510.5px;top:556px;transform:scaleX(0.885);">adapter</span>
<div style="left:504px;top:574px;width:100px;height:19px;background:#e3eaf6;border:1px solid #a1b6d3;box-shadow:inset 0 0 0 1px #e8f1fd;"></div>
<span style="left:510.5px;top:575px;transform:scaleX(0.859);">signalling</span>
<div style="left:504px;top:593px;width:100px;height:19px;background:#e3eaf6;border:1px solid #a1b6d3;box-shadow:inset 0 0 0 1px #e8f1fd;"></div>
<span style="left:510.5px;top:594px;transform:scaleX(0.947);">Total</span>
<div style="left:999px;top:180px;width:17px;height:541px;background:linear-gradient(90deg,#9cb5da,#8aa6cf 50%,#7f9cc7);border:1px solid #b4c8e4;border-right-color:#8eaad2;"></div>
<div style="left:604px;top:721px;width:395px;height:17px;background:linear-gradient(#9cb5da,#8aa6cf 50%,#7f9cc7);border:1px solid #b4c8e4;border-bottom-color:#8eaad2;"></div>
<svg style="left:999px;top:180px" width="17" height="541" viewBox="0 0 17 541"><path d="M4 9.600l4.500-4 4.500 4z" fill="#a5bde0"/><path d="M4 10.5h9" stroke="#7391bf"/><path d="M4 530.4l4.5 4 4.5-4z" fill="#a9c0e2"/><path d="M4 529.9h9" stroke="#b9cce8"/></svg>
<svg style="left:604px;top:721px" width="395" height="17" viewBox="0 0 395 17"><path d="M10.5 4.5l-4 4 4 4zM384 4.5l4 4-4 4z" fill="#a3bbdf"/></svg>
<svg style="left:310px;top:61px" width="14" height="14" viewBox="0 0 14 14"><path d="M0.5 0.5h11.2l1.8 1.8v11.2h-13z" fill="#c9a3dc" stroke="#9a56b4"/><rect x="2.5" y="7" width="9" height="6" fill="#fafafa" stroke="#b9a7c4" stroke-width=".6"/><rect x="3.2" y="0.8" width="7" height="4.2" fill="#e9dff0"/><rect x="7.6" y="1.3" width="1.8" height="3" fill="#9a56b4"/></svg>
<svg style="left:359.5px;top:67px" width="6" height="4" viewBox="0 0 6 4"><path d="M0 0h5.4L2.7 3.5z" fill="#1f3f8f"/></svg>
<svg style="left:373px;top:60px" width="17" height="15" viewBox="0 0 17 15"><path d="M1 3.2c0-.6.4-1 1-1h4l1.4 1.6h7c.6 0 1 .4 1 1V13c0 .5-.4.9-1 .9H2c-.6 0-1-.4-1-.9z" fill="#f3d77a" stroke="#d4b04a" stroke-width=".9"/><path d="M8.5 2.4l2.6-1.2 3.4 1.4v1.2h-6z" fill="#f8f4e4" stroke="#b9c79a" stroke-width=".5"/><path d="M1 6.3h14.4V13c0 .5-.4.9-1 .9H2c-.6 0-1-.4-1-.9z" fill="#f7e08e" stroke="#d4b04a" stroke-width=".9"/></svg>
<svg style="left:398.3px;top:67px" width="6" height="4" viewBox="0 0 6 4"><path d="M0 0h5.4L2.7 3.5z" fill="#1f3f8f"/></svg>
<div style="left:406px;top:60px;width:1px;height:16px;background:#c3d6f0;"></div>
<div style="left:407px;top:60px;width:1px;height:16px;background:#f4f8ff;"></div>
<svg style="left:413px;top:61px" width="16" height="14" viewBox="0 0 16 14"><path d="M0.900 10.800C3.200 8.200 7.200 3.800 13.700 0.900 9.800 4.600 6 9 3.600 12.900 2.600 13.600 0.600 12.600 0.900 10.800z" fill="#c5302a"/><path d="M1.300 2.100C1.900 0.900 3.500 0.900 4.400 1.700 7.200 4.600 10.600 8.400 14.500 12.300 10.400 10.100 6 6.700 1.700 3.600 1.200 3.200 1.100 2.600 1.300 2.100z" fill="#cc372d"/></svg>
<svg style="left:438px;top:60px" width="16" height="15" viewBox="0 0 16 15"><rect x="0.5" y="0.5" width="15" height="14" rx="1" fill="#fff" stroke="#a0abbb"/><rect x="2" y="2" width="12" height="2.600" fill="#4cbdea"/><rect x="2" y="2" width="3.200" height="11" fill="#4cbdea"/><path d="M5.500 4.600v8.400M8.500 4.600v8.400M11.500 4.600v8.400M5.200 7.400h8.800M5.200 10.200h8.800" stroke="#d9dde3" stroke-width=".6"/><path d="M2 7.400h3.200M2 10.200h3.200M8.500 2v2.600M11.500 2v2.600M5.400 2v2.600" stroke="#a5def5" stroke-width=".6"/><path d="M8.600 11.600L13.400 7.600M8.400 9.700v2.100h2.100M11.500 7.400h2.100v2.100" stroke="#3566c8" stroke-width="1.200" fill="none"/></svg>
<svg style="left:463px;top:61px" width="17" height="13" viewBox="0 0 17 13"><ellipse cx="5" cy="6.300" rx="2.900" ry="4.300" fill="none" stroke="#7f8c9c" stroke-width="1.100"/><ellipse cx="12" cy="6.300" rx="2.900" ry="4.300" fill="none" stroke="#7f8c9c" stroke-width="1.100"/><path d="M0.500 6.300h16" stroke="#d8382c" stroke-width="1.100"/></svg>
<svg style="left:491px;top:60px" width="11" height="16" viewBox="0 0 11 16"><ellipse cx="5.500" cy="4.600" rx="4" ry="2.900" fill="none" stroke="#7f8c9c" stroke-width="1.100"/><ellipse cx="5.500" cy="11.300" rx="4" ry="2.900" fill="none" stroke="#7f8c9c" stroke-width="1.100"/><path d="M5.500 0v16" stroke="#d8382c" stroke-width="1.100"/></svg>
<svg style="left:516px;top:60px" width="15" height="15" viewBox="0 0 15 15"><path d="M1 3.500h9.400M1 5.500h9.400M1 7.500h9.400M1 9.500h9.400M1 11.500h9.400" stroke="#3a3a3a" stroke-width="1"/><path d="M12.500 1.500v12" stroke="#d8382c" stroke-width="1.100"/><path d="M12.500 0.600l1.700 2.600h-3.400zM12.500 14.200l1.700-2.600h-3.400z" fill="#d8382c"/></svg>
<svg style="left:541.2px;top:67px" width="6" height="4" viewBox="0 0 6 4"><path d="M0 0h5.4L2.7 3.5z" fill="#1f3f8f"/></svg>
<svg style="left:555px;top:60px" width="14" height="15" viewBox="0 0 14 15"><path d="M2.500 1v9.200M4.500 1v9.200M6.500 1v9.200M8.500 1v9.200M10.500 1v9.200" stroke="#3a3a3a" stroke-width="1"/><path d="M1.500 12.500h11" stroke="#d8382c" stroke-width="1.100"/><path d="M0.300 12.500l2.600-1.700v3.400zM13.300 12.500l-2.600-1.700v3.400z" fill="#d8382c"/></svg>
<svg style="left:580px;top:67px" width="6" height="4" viewBox="0 0 6 4"><path d="M0 0h5.4L2.7 3.5z" fill="#1f3f8f"/></svg>
<svg style="left:594px;top:60px" width="16" height="15" viewBox="0 0 16 15"><rect x="0.5" y="0.5" width="14.6" height="14" rx="1" fill="#fff" stroke="#a5afbe"/><path d="M2.300 3.800h11M2.300 6.500h11M2.300 9h11" stroke="#e3e6ea" stroke-width=".7"/><rect x="2.200" y="9.900" width="11.300" height="2.900" fill="#58c2e5"/><path d="M3.600 11.400h2.200M6.800 11.400h2.200M10 11.400h2.200" stroke="#b5e6f5" stroke-width=".9"/><path d="M10.900 5.400V4.500H5.400L8 6.500 5.400 8.500h5.500V7.600" fill="none" stroke="#2e2e2e" stroke-width="1.500"/></svg>
<svg style="left:620px;top:60px" width="16" height="15" viewBox="0 0 16 15"><rect x="0.5" y="0.5" width="14.800" height="14" rx="1" fill="#fff" stroke="#a5afbe"/><rect x="2" y="2" width="12" height="2.400" fill="#41b4e6"/><rect x="2" y="2" width="3" height="11" fill="#41b4e6"/><rect x="5.500" y="5" width="4" height="2.400" fill="#e9f3d4"/><rect x="9.800" y="5" width="4.200" height="2.400" fill="#5bb045"/><rect x="5.500" y="7.800" width="4" height="2.400" fill="#f4e36a"/><rect x="9.800" y="7.800" width="4.200" height="2.400" fill="#9cc43c"/><rect x="5.500" y="10.600" width="4" height="2.400" fill="#f0a63c"/><rect x="9.800" y="10.600" width="4.200" height="2.400" fill="#e8c33c"/><path d="M5.200 2v11M9.600 2v11M2 4.700h12M2 7.600h12M2 10.400h12" stroke="#eaf5fb" stroke-width=".6"/></svg>
<svg style="left:646px;top:64px" width="16" height="9" viewBox="0 0 16 9"><path d="M2.400 1L1.800 7.600M4.800 1L4.200 7.600M0.600 3h5.800M0.400 5.600h5.800M11.400 1l-.6 6.600M13.800 1l-.6 6.600M9.600 3h5.800M9.400 5.600h5.800" stroke="#12127c" stroke-width="1.250"/><rect x="6.900" y="6.300" width="1.800" height="1.800" fill="#12127c"/></svg>
<svg style="left:674px;top:60px" width="12" height="14" viewBox="0 0 12 14"><rect x="0.300" y="0.800" width="11.400" height="12.400" fill="#fff" stroke="#d9e4f0" stroke-width=".6"/><rect x="0.300" y="0.800" width="11.400" height="2" fill="#63c3ea"/><path d="M2 5.500h8M2 7.500h8M2 9.500h8M2 11.500h6" stroke="#9a9a9a" stroke-width="1"/></svg>
<svg style="left:698px;top:61px" width="14" height="13" viewBox="0 0 14 13"><rect x="0.600" y="0.600" width="12.800" height="11.800" fill="#fff" stroke="#3a3a3a" stroke-width="1.100"/><rect x="1.200" y="1.200" width="2.300" height="10.600" fill="#d8d2bd"/><path d="M4.600 3.400h3.600M6.600 5.400h3.400M6.600 7.400h2.600M4.600 9.400h4" stroke="#1d3fae" stroke-width="1.100"/><path d="M8.600 3.400h2.600M9.600 7.400h1.600" stroke="#9a9a9a" stroke-width=".8"/></svg>
<svg style="left:724px;top:60px" width="16" height="16" viewBox="0 0 16 16"><rect x="0.500" y="0.500" width="13.500" height="13.500" fill="#fff" stroke="#a9b8cc"/><rect x="2" y="2" width="10.500" height="2.400" fill="#6cc4ec"/><rect x="2" y="2" width="3" height="10.500" fill="#6cc4ec"/><rect x="5.400" y="4.800" width="7" height="7.600" fill="#cdeaf8"/><path d="M5.200 2v10.500M8.800 2v10.500M2 4.600h10.500M2 7.400h10.500M2 10h10.500" stroke="#fff" stroke-width=".7"/><circle cx="11.600" cy="11.800" r="3.700" fill="#f4f7ff" stroke="#4a58b0" stroke-width="1"/><path d="M11.600 10.800v3" stroke="#2a3aa0" stroke-width="1.300"/><circle cx="11.600" cy="9.500" r=".8" fill="#2a3aa0"/></svg>
<div style="left:304px;top:738px;width:712px;height:22px;background:linear-gradient(#54739e 0,#54739e 1px,#e6f0fd 1px,#d8e7fb 2px,#d3e3fa 9px,#c0d8f7 10px,#c4daf8 100%);"></div>
<span style="left:308px;top:745px;color:#27457f;transform:scaleX(1.005);">Active Top N filters: 0</span>
<span style="right:13px;top:745px;color:#27457f;transform:scaleX(0.970);transform-origin:100% 0;">Sum: 16179 Count: 1 Average: 16179</span>
<div style="left:809px;top:745px;width:1px;height:15px;background:#b4caea;"></div>
<div style="left:810px;top:745px;width:1px;height:15px;background:#f2f7fe;"></div>
</div></body></html>
